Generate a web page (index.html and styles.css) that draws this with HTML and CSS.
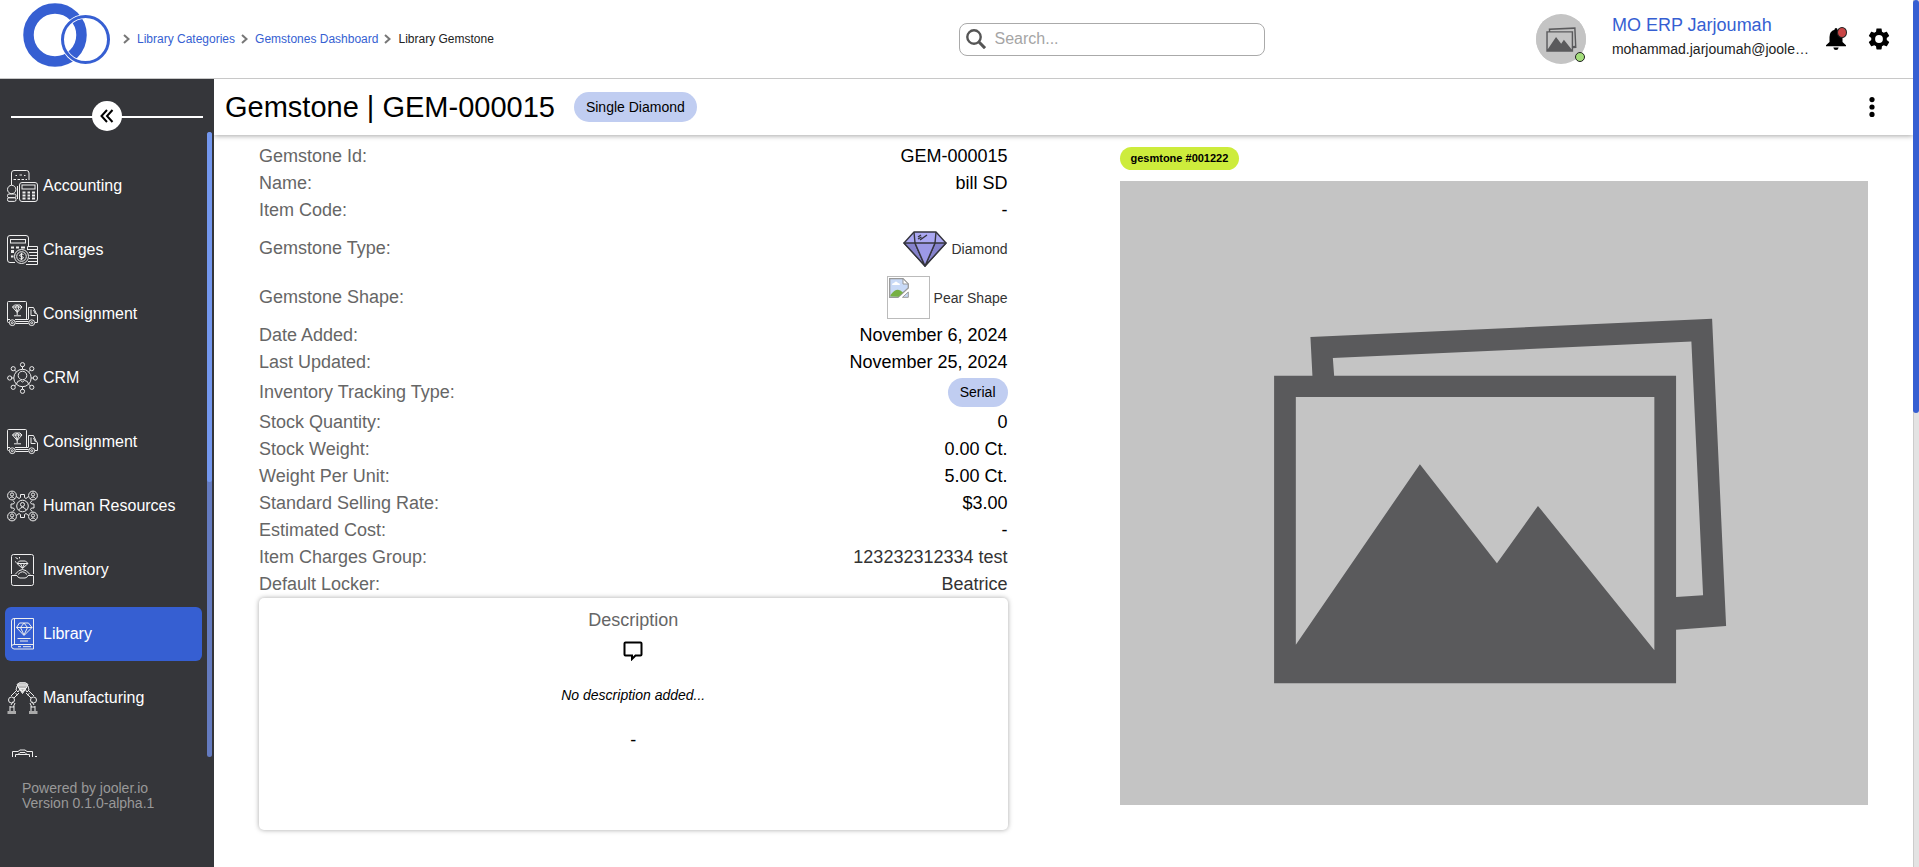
FILE: index.html
```html
<!DOCTYPE html>
<html lang="en">
<head>
<meta charset="utf-8">
<title>Library Gemstone</title>
<link rel="stylesheet" href="styles.css">
</head>
<body>
<svg class="defs" aria-hidden="true">
  <symbol id="placeholder" viewBox="0 0 748 624">
    <rect width="748" height="624" fill="#c4c4c4"/>
    <path fill="#5a5a5c" fill-rule="evenodd" d="M154 195H192.300L190.300 156.300 591.700 138 605.700 445 555.700 448.700V502.300H154ZM212.700 177.300 214 195H555.700V416L582.700 414.300 571 160.700ZM175.700 216.300V463.700L299.700 283.300 376.700 382.300 417.700 325 534 469.300V216.300Z"/>
  </symbol>
  <symbol id="truck" viewBox="0 0 31 26">
    <path d="M2 21.500H1.500Q.5 21.500 .5 20.500V1.500Q.5.500 1.500.500H18.500Q19.500.500 19.500 1.500V19M8.500 20.500H21.500M8.500 22.500H21.500M.5 18.500H3M8 18.500H21.500M21.500 18V6.500H26.500L29 12 30.500 14V21.500H28M24 8.500V14.500H28.500M26.500 9L28.500 13"/>
    <path d="M5.500 6 7.500 4H13L15 6 10.200 11.500ZM5.500 6H15M8.500 6 10.200 11 12 6M8.500 6 10.200 4 12 6M10.200 11V14M7 14.800H14"/>
    <circle cx="5.300" cy="21.700" r="2.900"/><circle cx="5.300" cy="21.700" r="1"/>
    <circle cx="24.700" cy="21.700" r="2.900"/><circle cx="24.700" cy="21.700" r="1"/>
  </symbol>
</svg>
<div class="app">
  <header class="header">
    <div class="lead">
      <a class="logo" href="#" aria-label="Home">
        <svg width="88" height="64" viewBox="0 0 88 64"><circle cx="32" cy="32" r="26.500" fill="none" stroke="#365fd2" stroke-width="10.500"/><circle cx="62.500" cy="36.500" r="23" fill="none" stroke="#fff" stroke-width="4.600"/><circle cx="62.500" cy="36.500" r="23" fill="none" stroke="#365fd2" stroke-width="3"/></svg>
      </a>
      <nav class="crumbs" aria-label="Breadcrumb">
        <svg class="chev" viewBox="0 0 7 10"><path d="M1 1 5.500 5 1 9"/></svg>
        <a href="#">Library Categories</a>
        <svg class="chev" viewBox="0 0 7 10"><path d="M1 1 5.500 5 1 9"/></svg>
        <a href="#">Gemstones Dashboard</a>
        <svg class="chev" viewBox="0 0 7 10"><path d="M1 1 5.500 5 1 9"/></svg>
        <span>Library Gemstone</span>
      </nav>
    </div>
    <label class="search">
      <svg width="20" height="20" viewBox="0 0 20 20" fill="none" stroke="#555"><circle cx="8" cy="8" r="6.700" stroke-width="2.400"/><path d="M13 13 19 19.200" stroke-width="3"/></svg>
      <input type="search" placeholder="Search..." aria-label="Search">
    </label>
    <div class="account">
      <div class="avatar">
        <svg class="avatar-pic" viewBox="0 -62 748 748"><use href="#placeholder" width="748" height="624"/></svg>
        <span class="online"></span>
      </div>
      <div class="who">
        <a class="who-name" href="#">MO ERP Jarjoumah</a>
        <span class="who-mail">mohammad.jarjoumah@joole…</span>
      </div>
      <button class="icon-btn bell" aria-label="Notifications">
        <svg width="20" height="22" viewBox="0 0 20 22"><path d="M10 0Q11.500 0 11.500 1.700 16.500 3 16.500 9V14L20 17.200V18.200H0V17.200L3.500 14V9Q3.500 3 8.500 1.700 8.500 0 10 0ZM7.300 19.500H12.700Q12.200 22 10 22T7.300 19.500Z"/></svg>
        <span class="alert"></span>
      </button>
      <button class="icon-btn" aria-label="Settings">
        <svg width="26" height="26" viewBox="0 0 24 24"><path d="M19.140 12.940c.04-.3.060-.61.060-.94s-.02-.64-.07-.94l2.030-1.580c.18-.14.230-.41.120-.61l-1.920-3.320c-.12-.22-.37-.29-.59-.22l-2.390.96c-.5-.38-1.030-.7-1.620-.94l-.36-2.540C14.360 2.570 14.160 2.400 13.920 2.400h-3.840c-.24 0-.43.170-.47.410l-.36 2.540c-.59.240-1.130.570-1.620.940l-2.390-.96c-.22-.08-.47 0-.59.220L2.740 8.870c-.12.210-.08.470.120.610l2.030 1.580c-.05.300-.09.630-.09.940s.02.640.070.940l-2.030 1.580c-.18.140-.23.410-.12.610l1.920 3.320c.12.220.370.290.590.220l2.390-.96c.5.380 1.030.7 1.620.940l.36 2.540c.05.240.240.410.480.410h3.840c.24 0 .44-.17.470-.41l.36-2.540c.59-.24 1.130-.56 1.620-.94l2.390.96c.22.080.470 0 .59-.22l1.920-3.320c.12-.22.070-.47-.12-.61ZM12 15.600A3.600 3.600 0 1 1 12 8.400a3.600 3.600 0 0 1 0 7.200Z"/></svg>
      </button>
    </div>
  </header>

  <div class="body">
    <aside class="sidebar">
      <div class="collapse">
        <button class="collapse-btn" aria-label="Collapse menu"><svg width="14" height="14" viewBox="0 0 14 14"><path d="M7 1 1.500 7 7 13M12.500 1 7 7 12.500 13" fill="none" stroke="#000" stroke-width="2"/></svg></button>
      </div>
      <div class="nav-wrap">
        <nav class="nav" aria-label="Main">
          <a class="item" href="#"><svg class="ico" viewBox="0 0 31 32"><path d="M4.500 15V3Q4.500.500 7 .500H19.500Q22 .5 22 3V10M6.500 9.500H9M10.500 9.500H13M14.500 9.500H17M18.500 9.500H20M8.500 5.500H10M12.500 5H15M17 5.500H18.500M10.500 16V29"/><circle cx="4.700" cy="19.500" r="4.200"/><rect x=".5" y="24" width="8.500" height="3.700" rx="1.500"/><rect x=".5" y="27.700" width="8.500" height="3.700" rx="1.500"/><rect x="12.500" y="12.500" width="18" height="19" rx="2.500"/><rect x="15" y="15" width="13" height="4"/><path d="M15.500 22.500H18.500M20.500 22.500H23M25 22.500H28M15.500 25.500H18.500M20.500 25.500H23M25 25.500H28M15.500 28.500H18.500M20.500 28.500H23M25 28.500H28" stroke-width="2"/></svg>Accounting</a>
          <a class="item" href="#"><svg class="ico" viewBox="0 0 31 32"><path d="M8 28.500H3Q.5 28.500 .5 26V4Q.5 1.500 3 1.500H19Q21.500 1.500 21.500 4V13"/><rect x="3.500" y="5.500" width="15" height="3.500"/><path d="M4 13.500H7M9 13.500H12M14 13.500H18M4 18H7M4 22.500H6.500M4 17H7" stroke-width="2"/><circle cx="14.500" cy="22.500" r="7"/><circle cx="14.500" cy="22.500" r="4.800"/><path d="M16.500 20.500Q14.500 19 13 20.500T14.500 22.500 16 24.500 12.500 24.500M14.500 18.800V26.200"/><path d="M20.500 16V12.500H30.500V30.500H19M20.500 15.500H30.500M22 18.500H30.500M22.500 21.500H30.500M22 24.500H30.500M21 27.500H30.500"/></svg>Charges</a>
          <a class="item" href="#"><svg class="ico"><use href="#truck"/></svg>Consignment</a>
          <a class="item" href="#"><svg class="ico" viewBox="0 0 31 32"><circle cx="15.500" cy="16" r="8.700"/><circle cx="15.500" cy="13.500" r="4.300"/><path d="M9.500 22Q10 18.500 13.500 18.500L15.500 20 17.500 18.500Q21 18.500 21.500 22M15.500 7.300V4.500M15.500 24.700V27.500M6.800 16H4.500M24.200 16H26.500M9.300 9.800 7.500 8M21.700 9.800 23.500 8M9.300 22.200 7.500 24M21.700 22.200 23.500 24"/><circle cx="15.500" cy="2.700" r="2.100"/><circle cx="15.500" cy="29.300" r="2.100"/><circle cx="2.700" cy="16" r="2.100"/><circle cx="28.300" cy="16" r="2.100"/><circle cx="6.200" cy="6.700" r="2.100"/><circle cx="24.800" cy="6.700" r="2.100"/><circle cx="6.200" cy="25.300" r="2.100"/><circle cx="24.800" cy="25.300" r="2.100"/></svg>CRM</a>
          <a class="item" href="#"><svg class="ico"><use href="#truck"/></svg>Consignment</a>
          <a class="item" href="#"><svg class="ico" viewBox="0 0 31 32"><g id="person"><circle cx="5" cy="5.500" r="4.400"/><circle cx="5" cy="4.500" r="1.600"/><path d="M2.300 8.800Q5 5 7.700 8.800"/></g><use href="#person" x="21"/><use href="#person" y="21"/><use href="#person" x="21" y="21"/><circle cx="15.500" cy="16" r="5.800"/><circle cx="15.500" cy="14.500" r="2"/><path d="M11.700 20Q15.500 14.500 19.300 20M9.500 6.500 12 8.500 13.500 7.500V4.500H17.500V7.500L19 8.500 21.500 6.500M9.500 25.500 12 23.500 13.500 24.500V27.500H17.500V24.500L19 23.500 21.500 25.500M6 10.500 7.500 12.500 6.500 14H4V18H6.500L7.500 19.500 6 21.500M25 10.500 23.500 12.500 24.500 14H27V18H24.500L23.500 19.500 25 21.500"/></svg>Human Resources</a>
          <a class="item" href="#"><svg class="ico" viewBox="0 0 31 32"><path d="M4.500 20V2.500Q4.500.500 6.500.500H24.500Q26.500.500 26.500 2.500V20M4.500 21.500H10Q11 24 13 24H18Q20 24 21 21.500H26.500V29.500Q26.500 31.500 24.500 31.500H6.500Q4.500 31.500 4.500 29.500ZM8 20.500Q15.500 10.500 23 20.500M11 20.500Q15.500 15 20 20.500M10 9.500 12.500 7H18.500L21 9.500 15.500 14.500ZM10 9.500H21M13.500 9.500 15.500 14 17.500 9.500M8 7.500 9.500 8.500M8.500 3.500 11 5M12.500 3V4.500"/></svg>Inventory</a>
          <a class="item active" href="#"><svg class="ico" viewBox="0 0 31 32"><path d="M26.500 26.500H7Q4.500 26.500 4.500 28.500T7 31H26.500V.5H7Q4.500.500 4.500 3V28.500M7.500.500V26.500M11 28.700H14M16 28.700H24M9.500 9.500 12.500 5H21.500L25 9.500 17 17.500ZM9.500 9.500H25M13.500 9.500 17 17 20.500 9.500 17 5 13.500 9.500M10.500 20.500H23.500M13 23H21"/></svg>Library</a>
          <a class="item" href="#"><svg class="ico" viewBox="0 0 31 32"><path d="M10 2.500 12.500.700H18.500L21 2.500 19 6.500H12ZM11 3H20M12.500 7 15.500 11.500 18.500 7M13.500 7 15.500 10 17.500 7" fill="#bbb"/><path d="M10 4 9 8 11 10 13 7M21 4 22 8 20 10 18 7M9 9 4 14M12 11 7 16M22 9 27 14M19 11 24 16M8.500 11.500 11 13M22.500 11.500 20 13M4 23 6 19.500M8 21 6.500 24.500M27 23 25 19.500M23 21 24.500 24.500M3 24V29M7 24V29M28 24V29M24 24V29M3 25H7M24 25H28"/><circle cx="4.500" cy="18" r="3"/><circle cx="26.500" cy="18" r="3"/><path d="M.5 30.500H9M22 30.500H30.500" stroke="#aaa" stroke-width="3"/></svg>Manufacturing</a>
          <a class="item" href="#" aria-label="Purchasing"><svg class="ico" viewBox="0 -3 31 32"><path d="M5.500 12V2.500H11L13 1H18L20 2.500H25.500V20H5.500V10M8.500 12V5.500H22.500V10M11 5.500 13 3.500H18L20 5.500M28 7.500H30"/></svg></a>
        </nav>
        <div class="nav-scroll"><div class="nav-thumb"></div></div>
      </div>
      <footer class="foot">Powered by jooler.io<br>Version 0.1.0-alpha.1</footer>
    </aside>

    <main class="main">
      <div class="titlebar">
        <h1>Gemstone | GEM-000015</h1>
        <span class="pill">Single Diamond</span>
        <button class="icon-btn more" aria-label="More actions"><svg width="6" height="20" viewBox="0 0 6 20"><circle cx="3" cy="2.600" r="2.600"/><circle cx="3" cy="10" r="2.600"/><circle cx="3" cy="17.400" r="2.600"/></svg></button>
      </div>
      <div class="content">
        <section>
          <dl class="details">
            <div><dt>Gemstone Id:</dt><dd>GEM-000015</dd></div>
            <div><dt>Name:</dt><dd>bill SD</dd></div>
            <div><dt>Item Code:</dt><dd>-</dd></div>
            <div class="tall"><dt>Gemstone Type:</dt><dd class="small">
              <svg width="44" height="36" viewBox="0 0 44 36" stroke="#35353d" stroke-width="1.400" stroke-linejoin="round"><path fill="#aba8f2" d="M11 1H33L43 12 22 35 1 12Z"/><path fill="#8582cc" d="M1 12H12L22 35ZM43 12H32L22 35Z"/><path fill="#9c99e6" d="M12 12H32L22 35Z"/><path fill="none" d="M11 1 12 12M33 1 32 12M15 6 18 4M15 8 18.500 6M17 9 24 4"/></svg>Diamond</dd></div>
            <div class="tall"><dt>Gemstone Shape:</dt><dd class="small">
              <span class="broken"><svg width="20" height="20" viewBox="0 0 20 20"><path d="M.7.700H14L19.300 6V10L9 19.300H.7Z" fill="#c9daf7" stroke="#999" stroke-width="1.300"/><path d="M3 7Q3 5 5 5 7 2 9 5 11 5 11 7Z" fill="#fff"/><path d="M1.500 18.500V17Q8 8 14 14.500L9.500 18.700Z" fill="#76b043"/><path d="M14 .7V6H19.300Z" fill="#fff" stroke="#999"/><path d="M19.300 14V19.300H13.500Z" fill="#c9daf7" stroke="#999"/></svg></span>Pear Shape</dd></div>
            <div><dt>Date Added:</dt><dd>November 6, 2024</dd></div>
            <div><dt>Last Updated:</dt><dd>November 25, 2024</dd></div>
            <div class="mid"><dt>Inventory Tracking Type:</dt><dd><span class="pill">Serial</span></dd></div>
            <div><dt>Stock Quantity:</dt><dd>0</dd></div>
            <div><dt>Stock Weight:</dt><dd>0.00 Ct.</dd></div>
            <div><dt>Weight Per Unit:</dt><dd>5.00 Ct.</dd></div>
            <div><dt>Standard Selling Rate:</dt><dd>$3.00</dd></div>
            <div><dt>Estimated Cost:</dt><dd>-</dd></div>
            <div><dt>Item Charges Group:</dt><dd class="soft">123232312334 test</dd></div>
            <div><dt>Default Locker:</dt><dd class="soft">Beatrice</dd></div>
          </dl>
          <article class="card">
            <h2>Description</h2>
            <svg width="20" height="20" viewBox="0 0 20 20"><path d="M2.500 1.500H17.500Q18.500 1.500 18.500 2.500V13.500Q18.500 14.500 17.500 14.500H12.500L9 18V14.500H2.500Q1.500 14.500 1.500 13.500V2.500Q1.500 1.500 2.500 1.500Z" fill="none" stroke="#000" stroke-width="2"/></svg>
            <p class="empty">No description added...</p>
            <p class="dash">-</p>
          </article>
        </section>
        <section>
          <span class="tag">gesmtone #001222</span>
          <svg class="photo" viewBox="0 0 748 624" preserveAspectRatio="xMidYMid slice" role="img" aria-label="No image"><use href="#placeholder"/></svg>
        </section>
      </div>
    </main>
  </div>
</div>
<div class="page-scroll"><div class="page-thumb"></div></div>
</body>
</html>
```
FILE: styles.css
```css
* { box-sizing: border-box; }
body {
  margin: 0;
  height: 100vh;
  display: flex;
  overflow: hidden;
  background: #fff;
  color: #000;
  font-family: "Liberation Sans", Arial, sans-serif;
}
a { color: inherit; text-decoration: none; }
h1, h2, p, dl, dd { margin: 0; font-weight: 400; }
button { border: 0; padding: 0; background: none; cursor: pointer; }
svg { display: block; flex: none; }
.defs { position: absolute; width: 0; height: 0; }

.app { flex: 1; min-width: 0; display: flex; flex-direction: column; }
.page-scroll { width: 6px; background: #e3e3e3; box-shadow: inset 1px 0 #ccc; }
.page-thumb { height: 47.6%; background: #365fd2; border-radius: 3px; }

/* Header */
.header {
  height: 79px;
  flex: none;
  display: flex;
  align-items: center;
  border-bottom: 1px solid #c8c8c8;
}
.lead { flex: 0 0 50%; display: flex; align-items: center; }
.logo { margin: 0 12px 8px 23px; }
.crumbs { display: flex; align-items: center; font-size: 12px; color: #222; }
.crumbs a { color: #365fd2; margin-right: 6px; }
.chev { width: 7px; height: 10px; margin-right: 7px; fill: none; stroke: #777; stroke-width: 2; }
.search {
  width: 306px;
  height: 33px;
  margin-left: 2px;
  display: flex;
  align-items: center;
  gap: 9px;
  padding: 0 6px;
  border: 1px solid #aaa;
  border-radius: 8px;
}
.search input {
  flex: 1;
  min-width: 0;
  padding: 0;
  border: 0;
  outline: 0;
  background: none;
  font: inherit;
  font-size: 16px;
}
.search input::placeholder { color: #a5a5a5; }
.account { flex: 1; display: flex; align-items: center; justify-content: flex-end; padding-right: 21px; }
.avatar { position: relative; margin-right: 26px; }
.avatar-pic { width: 50px; height: 50px; border-radius: 50%; background: #c4c4c4; }
.online, .alert { position: absolute; border: 1px solid #222; border-radius: 50%; }
.online { right: 1px; bottom: 2px; width: 10px; height: 10px; background: #a4de7c; }
.alert { top: -1px; right: -1px; width: 10px; height: 11px; background: #c94545; }
.who { min-width: 191px; display: flex; flex-direction: column; gap: 6px; margin: 0 17px 6px 0; }
.who-name { color: #365fd2; font-size: 18px; line-height: 20px; }
.who-mail { color: #222; font-size: 14px; line-height: 16px; white-space: nowrap; }
.icon-btn { position: relative; flex: none; }
.bell { margin-right: 20px; }

/* Sidebar */
.body { flex: 1; min-height: 0; display: flex; }
.sidebar { width: 214px; flex: none; display: flex; flex-direction: column; background: #35363a; }
.collapse {
  height: 53px;
  padding: 22px 11px 0;
  display: flex;
  justify-content: center;
  background: linear-gradient(#fff, #fff) 11px 37px / 192px 2px no-repeat;
}
.collapse-btn {
  width: 30px;
  height: 30px;
  border-radius: 50%;
  background: #fff;
  display: flex;
  align-items: center;
  justify-content: center;
}
.nav-wrap { flex: 1; min-height: 0; display: flex; justify-content: space-between; padding-right: 2px; }
.nav {
  width: 202px;
  padding: 22px 0 0 5px;
  overflow: hidden;
  display: grid;
  grid-auto-rows: 64px;
}
.nav .item {
  height: 54px;
  align-self: center;
  display: flex;
  align-items: center;
  gap: 5px;
  padding-left: 2px;
  border-radius: 6px;
  color: #fff;
  font-size: 16px;
}
.nav .active { background: #365fd2; }
.ico { width: 31px; height: 32px; fill: none; stroke: #eee; stroke-width: 1; }
.nav-scroll { width: 5px; background: #647bc0; border-radius: 3px; }
.nav-thumb { height: 56%; background: #7397ee; border-radius: 3px; }
.foot { height: 110px; padding: 24px 22px; color: #999; font-size: 14px; line-height: 15px; }

/* Main */
.main { flex: 1; min-width: 0; }
.titlebar {
  height: 56px;
  display: flex;
  align-items: center;
  gap: 19px;
  padding: 0 38px 0 11px;
  box-shadow: 0 1px 5px rgba(0, 0, 0, .35);
  clip-path: inset(0 0 -8px 0);
}
.titlebar h1 { font-size: 29px; line-height: 32px; }
.titlebar .pill { line-height: 30px; }
.more { margin-left: auto; }
.pill {
  padding: 0 12px;
  border-radius: 15px;
  background: #c0cdf1;
  font-size: 14px;
  line-height: 29px;
}
.content { display: grid; grid-template-columns: 1fr 1fr; gap: 112px; padding: 8px 45px 0; }
.details > div { height: 27px; display: flex; align-items: center; justify-content: space-between; font-size: 18px; }
.details > .tall { height: 49px; }
.details > .mid { height: 33px; }
.details dt { color: #666; }
.details dd { display: flex; align-items: center; }
.details .soft { color: #333; }
.details .small { gap: 4px; color: #333; font-size: 14px; }
.broken { width: 43px; height: 43px; padding: 1px; border: 1px solid #bbb; }
.card {
  height: 232px;
  padding-top: 12px;
  display: flex;
  flex-direction: column;
  align-items: center;
  border-radius: 5px;
  box-shadow: 0 0 5px rgba(0, 0, 0, .35);
}
.card h2 { color: #666; font-size: 18px; line-height: 20px; margin-bottom: 11px; }
.card .empty { margin-top: 26px; font-size: 14px; font-style: italic; line-height: 16px; }
.card .dash { margin-top: 27px; font-size: 18px; line-height: 20px; }
.tag {
  display: block;
  width: fit-content;
  margin: 4px 0 11px;
  padding: 0 11px;
  border-radius: 12px;
  background: #cdec3c;
  font-size: 11px;
  font-weight: 700;
  line-height: 23px;
}
.photo { width: 100%; aspect-ratio: 6 / 5; }
```
